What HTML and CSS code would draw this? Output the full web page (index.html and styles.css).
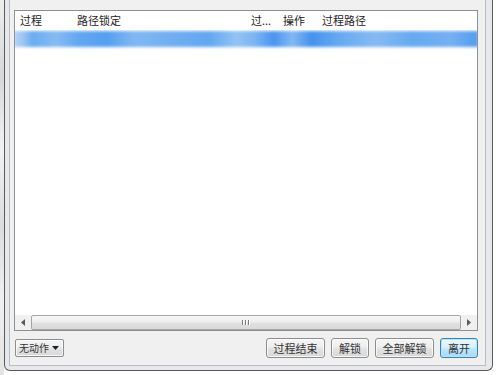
FILE: index.html
```html
<!DOCTYPE html>
<html lang="zh-CN">
<head>
<meta charset="utf-8">
<title>Unlocker</title>
<link rel="stylesheet" href="styles.css">
</head>
<body>
<div class="page">
  <div class="bgstrip"></div>
  <div class="dialog">
    <div class="client">
      <div class="listbox">
        <div class="header">
          <div class="col c1">过程</div>
          <div class="col c2">路径锁定</div>
          <div class="col c3">过...</div>
          <div class="col c4">操作</div>
          <div class="col c5">过程路径</div>
        </div>
        <div class="rows">
          <div class="row selected"></div>
        </div>
        <div class="hscroll">
          <div class="arrow left"><svg width="4" height="7" viewBox="0 0 4 7"><path d="M4 0 L0 3.5 L4 7 Z" fill="#5a5a5a"/></svg></div>
          <div class="thumb"><span class="grip"></span><span class="grip"></span><span class="grip"></span></div>
          <div class="arrow right"><svg width="4" height="7" viewBox="0 0 4 7"><path d="M0 0 L4 3.5 L0 7 Z" fill="#5a5a5a"/></svg></div>
        </div>
      </div>
      <div class="actions">
        <div class="btn combo"><span class="combo-text">无动作</span><svg width="7" height="4" viewBox="0 0 7 4"><path d="M0 0 H7 L3.5 4 Z" fill="#222"/></svg></div>
        <div class="spacer"></div>
        <div class="btn wide">过程结束</div>
        <div class="btn narrow">解锁</div>
        <div class="btn wide">全部解锁</div>
        <div class="btn narrow default">离开</div>
      </div>
    </div>
  </div>
  <div class="bgright"></div>
</div>
</body>
</html>
```

FILE: styles.css
```css
* { box-sizing: border-box; }
html, body { margin: 0; padding: 0; }
body {
  width: 500px;
  height: 375px;
  overflow: hidden;
  background: #ffffff;
  font-family: "Noto Sans CJK SC", "Noto Sans", sans-serif;
  font-size: 11px;
  color: #222222;
}
.page {
  display: flex;
  align-items: flex-start;
  height: 375px;
}
.bgstrip {
  width: 4px;
  height: 375px;
  background: linear-gradient(to bottom, #eeeeee 0%, #d8d8d8 20%, #f2f2f2 40%, #dcdcdc 60%, #f0f0f0 80%, #e4e4e4 100%);
}
.bgright { flex: 1; }
.dialog {
  width: 489px;
  height: 371px;
  border: 1px solid #555b63;
  border-top: none;
  border-radius: 0 0 6px 6px;
  background: #e6e8eb;
  padding: 0 6px 4px 4px;
}
.client {
  height: 366px;
  background: #f0f0f0;
  border: 1px solid #b9bcc0;
  border-top: none;
  padding: 10px 7px 0 4px;
  display: flex;
  flex-direction: column;
}
.listbox {
  height: 321px;
  border: 1px solid #8b9097;
  background: #ffffff;
  display: flex;
  flex-direction: column;
}
.header {
  display: flex;
  height: 19px;
  align-items: center;
  line-height: 19px;
}
.col {
  padding-left: 5px;
  height: 19px;
  white-space: nowrap;
  overflow: hidden;
  color: #222222;
}
.c1 { width: 57px; }
.c2 { width: 174px; }
.c3 { width: 32px; }
.c4 { width: 39px; }
.c5 { flex: 1; }
.rows {
  flex: 1;
  padding-top: 1px;
  overflow: hidden;
}
.row {
  height: 16px;
}
.row.selected {
  margin: 0 -1px;
  background: linear-gradient(to right,
    #b4d3f5 0%, #9cc6f3 2%, #6aacf1 4%, #86bbf2 9%, #62a7f0 14%, #559ff0 20%,
    #80b8f2 26%, #71aef1 34%, #62a7f0 42%, #93c3f3 48%, #79b4f2 52%,
    #4995ee 56%, #82b9f2 60%, #4592ee 64%, #66a9f0 70%, #85baf2 78%,
    #66a9f0 86%, #76b0f1 94%, #529cef 100%);
  filter: blur(1.5px);
}
.hscroll {
  height: 15px;
  display: flex;
  background: #f0f0f0;
}
.arrow {
  width: 16px;
  height: 15px;
  display: flex;
  align-items: center;
  justify-content: center;
}
.thumb {
  flex: 1;
  height: 15px;
  border: 1px solid #a3a6a9;
  border-radius: 2px;
  background: linear-gradient(to bottom, #f7f7f7 0%, #eeeeee 45%, #e0e0e0 55%, #dadada 100%);
  display: flex;
  align-items: center;
  justify-content: center;
  gap: 1px;
}
.grip {
  width: 1px;
  height: 5px;
  background: #7a7a7a;
  box-shadow: 1px 0 0 #ffffff;
  margin-right: 1px;
}
.actions {
  display: flex;
  align-items: center;
  gap: 6px;
  padding-top: 7px;
  padding-left: 1px;
}
.spacer { flex: 1; }
.btn {
  height: 20px;
  border: 1px solid #8c8d8e;
  border-radius: 3px;
  background: linear-gradient(to bottom, #f5f5f5 0%, #eeeeee 45%, #e2e2e2 55%, #d8d8d8 100%);
  box-shadow: inset 0 0 0 1px rgba(255,255,255,0.75);
  display: flex;
  align-items: center;
  justify-content: center;
  line-height: 18px;
  color: #333333;
  white-space: nowrap;
}
.combo {
  width: 49px;
  height: 18px;
  justify-content: space-between;
  padding: 0 4px 0 3px;
  border-radius: 2px;
}
.combo-text { font-size: 10px; }
.wide { width: 59px; }
.narrow { width: 38px; }
.default {
  border-color: #3c7fb1;
  background: linear-gradient(to bottom, #eaf6fd 0%, #d9f0fc 45%, #bee6fd 55%, #a7d9f5 100%);
  box-shadow: inset 0 0 0 1px #b6e6fb;
}
```
